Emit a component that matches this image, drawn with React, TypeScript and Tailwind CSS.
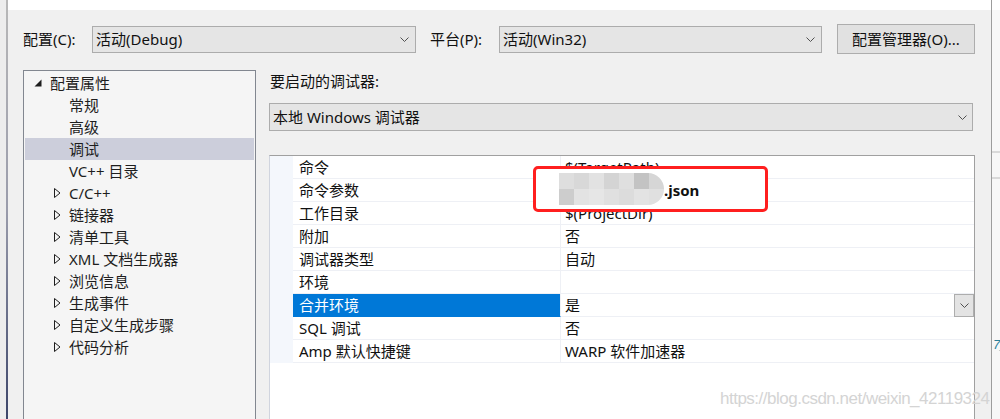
import React from "react";

const font = "font-['Noto_Sans','Noto_Sans_CJK_SC',sans-serif]";

function Chevron() {
  return (
    <svg width="9" height="5" viewBox="0 0 9 5">
      <path d="M0.5 0.5 L4.5 4.5 L8.5 0.5" fill="none" stroke="#505050" strokeWidth="1" />
    </svg>
  );
}

function Combo({ text, w }: { text: string; w: string }) {
  return (
    <div className={`${w} h-[27px] flex items-center justify-between bg-[#e5e5e5] border border-[#acacac] pl-[3px] pr-[6px]`}>
      <span className="text-[15px] text-[#111]">{text}</span>
      <Chevron />
    </div>
  );
}

function Expanded() {
  return (
    <svg width="8" height="8" viewBox="0 0 8 8" className="mr-[8px]">
      <polygon points="7.5,0.5 7.5,7.5 0.5,7.5" fill="#1e1e1e" />
    </svg>
  );
}

function Collapsed() {
  return (
    <svg width="7" height="10" viewBox="0 0 7 10" className="mr-[8px]">
      <polygon points="0.5,0.5 6,5 0.5,9.5" fill="none" stroke="#1e1e1e" strokeWidth="1" />
    </svg>
  );
}

const tree: { label: string; kind: "root" | "leaf" | "node"; selected?: boolean }[] = [
  { label: "配置属性", kind: "root" },
  { label: "常规", kind: "leaf" },
  { label: "高级", kind: "leaf" },
  { label: "调试", kind: "leaf", selected: true },
  { label: "VC++ 目录", kind: "leaf" },
  { label: "C/C++", kind: "node" },
  { label: "链接器", kind: "node" },
  { label: "清单工具", kind: "node" },
  { label: "XML 文档生成器", kind: "node" },
  { label: "浏览信息", kind: "node" },
  { label: "生成事件", kind: "node" },
  { label: "自定义生成步骤", kind: "node" },
  { label: "代码分析", kind: "node" },
];

const props: { name: string; value: string; bold?: boolean; selected?: boolean }[] = [
  { name: "命令", value: "$(TargetPath)" },
  { name: "命令参数", value: "", bold: true },
  { name: "工作目录", value: "$(ProjectDir)" },
  { name: "附加", value: "否" },
  { name: "调试器类型", value: "自动" },
  { name: "环境", value: "" },
  { name: "合并环境", value: "是", selected: true },
  { name: "SQL 调试", value: "否" },
  { name: "Amp 默认快捷键", value: "WARP 软件加速器" },
];

const mosaic = [
  ["#dedede", "#d8d8d8", "#e2e2e2", "#d4d4d4", "#dfdfdf", "#c3c3c3", "#d6d6d6"],
  ["#cdcdcd", "#e3e3e3", "#e6e6e6", "#e0e0e0", "#dcdcdc", "#e3e3e3", "#e0e0e0"],
];

export default function App() {
  return (
    <div className={`relative w-[1000px] h-[419px] overflow-hidden flex bg-white ${font}`}>
      {/* window edge on the left */}
      <div className="w-[8px] flex shrink-0">
        <div className="w-[6px] bg-[#ededed]" />
        <div className="w-[2px] bg-gradient-to-b from-[#b8b8b8] via-[#9a9cab] to-[#3d4569]" />
      </div>

      {/* dialog body */}
      <div className="w-[983px] shrink-0 flex flex-col bg-[#f0f0f0]">
        <div className="h-[10px] bg-white shrink-0" />

        <div className="flex items-center mt-[14px] pl-[15px] h-[30px] shrink-0">
          <span className="w-[69px] text-[15px] text-[#111]">配置(C):</span>
          <Combo text="活动(Debug)" w="w-[324px]" />
          <span className="ml-[14px] w-[69px] text-[15px] text-[#111]">平台(P):</span>
          <Combo text="活动(Win32)" w="w-[323px]" />
          <button className="ml-[15px] w-[138px] h-[30px] bg-[#e1e1e1] border border-[#adadad] text-[15px] text-[#111]">
            配置管理器(O)...
          </button>
        </div>

        <div className="flex mt-[16px] pl-[15px] flex-1 min-h-0">
          {/* tree */}
          <div className="w-[233px] h-[400px] shrink-0 border border-[#828790] bg-[#f5f5f5] pt-[1px] px-[1px]">
            {tree.map((t) => (
              <div
                key={t.label}
                className={`h-[22px] flex items-center text-[15px] text-[#1e1e1e] ${t.selected ? "bg-[#cccedb]" : ""} ${
                  t.kind === "root" ? "pl-[9px]" : t.kind === "node" ? "pl-[29px]" : "pl-[44px]"
                }`}
              >
                {t.kind === "root" && <Expanded />}
                {t.kind === "node" && <Collapsed />}
                <span>{t.label}</span>
              </div>
            ))}
          </div>

          {/* right panel */}
          <div className="ml-[13px] w-[706px] flex flex-col">
            <div className="h-[22px] shrink-0 flex items-center pl-[1px] text-[15px] text-[#111]">要启动的调试器:</div>
            <div className="mt-[11px] shrink-0 w-[704px] h-[28px] flex items-center justify-between bg-[#e5e5e5] border border-[#acacac] pl-[3px] pr-[5px]">
              <span className="text-[15px] text-[#111]">本地 Windows 调试器</span>
              <Chevron />
            </div>

            <div className="mt-[24px] flex-1 bg-white border-t border-r border-[#a0a0a0] border-l border-l-[#d0d4de]">
              {props.map((p) => (
                <div key={p.name} className="h-[23px] flex text-[15px]">
                  <div className="w-[23px] bg-[#f4f7fc]" />
                  <div
                    className={`w-[268px] flex items-center pl-[6px] border-b border-r ${
                      p.selected ? "bg-[#0078d7] text-white border-b-[#0078d7] border-r-[#eef0f5]" : "text-[#111] border-[#eef0f5]"
                    }`}
                  >
                    {p.name}
                  </div>
                  <div className="flex-1 flex items-center justify-between pl-[4px] border-b border-[#eef0f5] text-[#111]">
                    <span className={p.bold ? "font-bold" : ""}>{p.value}</span>
                    {p.selected && (
                      <div className="w-[20px] h-[23px] flex items-center justify-center bg-[#e3e3e3] border border-[#adadad]">
                        <Chevron />
                      </div>
                    )}
                  </div>
                </div>
              ))}
            </div>
          </div>
        </div>
      </div>

      {/* dialog right border and window behind */}
      <div className="w-[1px] shrink-0 bg-[#9c9c9c]" />
      <div className="flex-1 flex flex-col bg-[#f7f7f7]">
        <div className="h-[10px] bg-white" />
        <div className="mt-[141px] h-[2px] bg-[#d9d9d9]" />
        <div className="mt-[24px] h-[2px] bg-[#d9d9d9]" />
        <div className="mt-[158px] pl-[1px] text-[13px] leading-[16px] text-[#2a7f9a] italic font-['Liberation_Sans',sans-serif]">
          7_
        </div>
      </div>

      {/* red annotation box over the arguments field */}
      <div className="absolute left-[533px] top-[166px] w-[235px] h-[46px] bg-white border-[3px] border-[#ff1f1f] rounded-[5px]" />
      <div className="absolute left-[559px] top-[173px] flex flex-col rounded-r-[16px] overflow-hidden">
        {mosaic.map((row, i) => (
          <div key={i} className="flex">
            {row.map((c, j) => (
              <div key={j} className="w-[15px] h-[16px]" style={{ backgroundColor: c }} />
            ))}
          </div>
        ))}
      </div>
      <div className="absolute left-[664px] top-[179px] text-[15px] leading-[22px] font-bold text-[#111]">.json</div>

      {/* watermark */}
      <div className="absolute left-[720px] top-[387px] text-[17px] leading-[24px] tracking-[-0.5px] text-[#d4d4d4] font-['Liberation_Sans',sans-serif]">
        https://blog.csdn.net/weixin_42119324
      </div>
    </div>
  );
}
